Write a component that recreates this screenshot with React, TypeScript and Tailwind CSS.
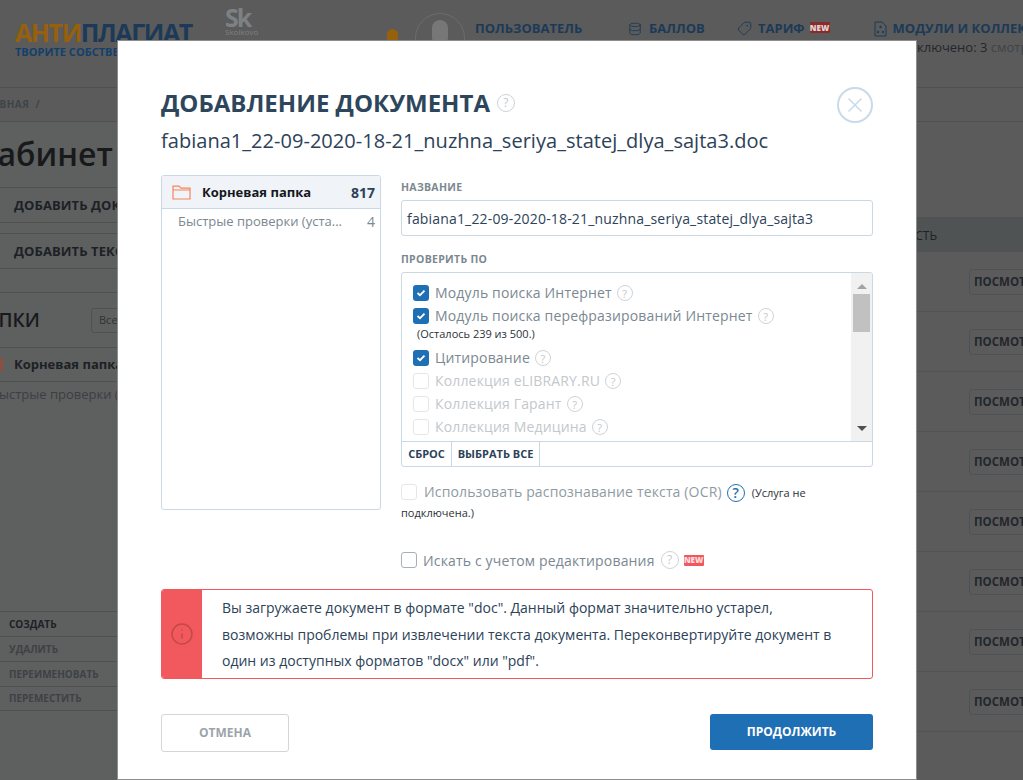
import { Database, Info, Tag, X } from "lucide-react";

const font = { fontFamily: '"Open Sans", "Noto Sans", sans-serif' };

function Help({ className = "ml-[5px] border-[#cfd3d6] text-[#c4c8cb]" }: { className?: string }) {
    return (
        <span className={`inline-flex h-[16px] w-[16px] shrink-0 items-center justify-center rounded-full border text-[11px] leading-none ${className}`}>?</span>
    );
}

function NewBadge({ className = "" }: { className?: string }) {
    return (
        <span className={`inline-flex h-[11px] w-[20px] items-center justify-center rounded-[1px] text-[8px] font-extrabold leading-none text-white/80 ${className}`}>NEW</span>
    );
}

function Check({ on, faded }: { on?: boolean; faded?: boolean }) {
    if (on) {
        return (
            <span className="flex h-[16px] w-[16px] shrink-0 items-center justify-center rounded-[3px] bg-[#1f6fb5]">
                <svg width="10" height="8" viewBox="0 0 10 8" fill="none">
                    <path d="M1.5 4 L4 6.2 L8.5 1.6" stroke="#fff" strokeWidth="1.8" />
                </svg>
            </span>
        );
    }
    return <span className={`h-[16px] w-[16px] shrink-0 rounded-[3px] border ${faded ? "border-[#e4e7e9]" : "border-[#a9b0b5]"}`}></span>;
}

function Row({ label, on, mb = "mb-[7px]" }: { label: string; on?: boolean; mb?: string }) {
    return (
        <div className={`flex h-[16px] items-center ${mb}`}>
            <Check on={on} faded={!on} />
            <span className={`ml-[6px] text-[14px] leading-none tracking-[0.16px] ${on ? "text-[#7b8891]" : "text-[#c3c8cc]"}`}>{label}</span>
            <Help />
        </div>
    );
}

function Background() {
    const sideActions = ["СОЗДАТЬ", "УДАЛИТЬ", "ПЕРЕИМЕНОВАТЬ", "ПЕРЕМЕСТИТЬ"];
    const rows = [0, 1, 2, 3, 4, 5, 6, 7];

    return (
        <div className="flex h-[780px] flex-col overflow-hidden bg-[#5b5b5b]">
            {/* header */}
            <div className="flex h-[88px] shrink-0 border-b border-[#505050] pl-[15px]">
                <div className="w-[210px] shrink-0 overflow-hidden pt-[17px]">
                    <div className="text-[25px] font-bold leading-[30px] tracking-[-1.4px] whitespace-nowrap">
                        <span className="text-[#96600c]">АНТИ</span>
                        <span className="text-[#1c3a57]">ПЛАГИАТ</span>
                    </div>
                    <div className="mt-[-2px] text-[11px] font-bold leading-[14px] whitespace-nowrap text-[#13406b]">ТВОРИТЕ СОБСТВЕННЫМ УМОМ</div>
                </div>
                <div className="w-[162px] shrink-0 pt-[6px] text-[#7d8184]">
                    <div className="text-[25px] font-bold leading-[22px] tracking-[-2px]">Sk</div>
                    <div className="text-[8px] leading-[8px]">Skolkovo</div>
                </div>
                <div className="mt-[29px] h-[30px] w-[11px] shrink-0 rounded-t-full bg-[#96600c]"></div>
                <div className="ml-[17px] mt-[13px] flex h-[50px] w-[50px] shrink-0 justify-center rounded-full border border-[#6c6c6c] pt-[6px]">
                    <div className="h-[26px] w-[16px] rounded-full bg-[#777]"></div>
                </div>
                <div className="ml-[10px] flex h-[56px] shrink-0 items-center pt-[1px] text-[13px] font-bold whitespace-nowrap text-[#1c3a57]">
                    <span className="w-[153px]">ПОЛЬЗОВАТЕЛЬ</span>
                    <Database className="mr-[7px] h-[14px] w-[14px]" strokeWidth={1.5} />
                    <span className="w-[88px]">БАЛЛОВ</span>
                    <Tag className="mr-[6px] h-[15px] w-[15px] -scale-x-100" strokeWidth={1.5} />
                    <span>ТАРИФ</span>
                    <NewBadge className="ml-[5px] mb-[2px] bg-[#8a2b2b]" />
                    <svg className="ml-[44px] mr-[6px]" width="13" height="16" viewBox="0 0 13 16" fill="none" stroke="#1c3a57">
                        <path d="M1 1 H8 L12 5 V15 H1 Z" />
                        <circle cx="6.5" cy="6" r="0.8" fill="#1c3a57" />
                        <circle cx="4" cy="11" r="0.8" fill="#1c3a57" />
                        <circle cx="9" cy="11" r="0.8" fill="#1c3a57" />
                    </svg>
                    <span>МОДУЛИ И КОЛЛЕКЦИИ</span>
                </div>
            </div>

            {/* breadcrumbs */}
            <div className="flex h-[34px] shrink-0 items-center border-b border-[#505050] text-[10px] font-bold tracking-[0.5px] text-[#3f4447]">
                <span className="-ml-[22px]">ГЛАВНАЯ</span>
                <span className="ml-[6px]">/</span>
            </div>

            <div className="flex min-h-0 flex-1">
                {/* folders */}
                <div className="flex w-[520px] shrink-0 flex-col bg-[#5e5f5f]">
                    <div className="-ml-[23px] mt-[10px] h-[44px] text-[32px] font-semibold leading-[44px] text-[#17191b]">Кабинет</div>
                    <div className="mt-[11px] flex h-[36px] items-center border-y border-[#505050] pl-[14px] pt-[1px] text-[13px] font-bold tracking-[0.1px] text-[#1c2126]">ДОБАВИТЬ ДОКУМЕНТ</div>
                    <div className="mt-[10px] flex h-[36px] items-center border-y border-[#505050] pl-[14px] pt-[1px] text-[13px] font-bold tracking-[0.1px] text-[#1c2126]">ДОБАВИТЬ ТЕКСТ</div>
                    <div className="mt-[23px] flex h-[56px] items-center border-y border-[#505050] text-[19px] font-semibold text-[#17191b]">
                        <span className="-ml-[28px] w-[119px]">ПАПКИ</span>
                        <span className="flex h-[25px] w-[120px] items-center rounded-[3px] border border-[#505050] pl-[7px] text-[11px] font-normal text-[#30343a]">Все</span>
                    </div>
                    <div className="flex h-[34px] items-center border-b border-[#505050] text-[13px] font-bold text-[#1c2126]">
                        <span className="mr-[11px] h-[13px] w-[3px] bg-[#8d4f42]"></span>
                        Корневая папка
                    </div>
                    <div className="-ml-[9px] mt-[3px] whitespace-nowrap text-[13px] text-[#3a3f43]">Быстрые проверки (установка)</div>

                    <div className="mt-auto mb-[69px] flex flex-col">
                        {sideActions.map((a, i) => (
                            <div key={a} className={`flex h-[25px] items-center border-t border-[#505050] pl-[9px] text-[10px] font-bold last:border-b ${i === 0 ? "text-[#1c2126]" : "text-[#3d4245]"}`}>
                                {a}
                            </div>
                        ))}
                    </div>
                </div>

                {/* documents */}
                <div className="flex min-w-0 flex-1 flex-col">
                    <div className="mt-[95px] flex h-[35px] shrink-0 items-center justify-end bg-[#505353] pr-[86px] pt-[2px] text-[12px] text-[#1c2126]">ЦЕЛОСТНОСТЬ</div>
                    {rows.map((r) => (
                        <div key={r} className="flex h-[60px] shrink-0 items-start justify-end border-b border-[#535353] pt-[17px]">
                            <span className="-mr-[36px] flex h-[26px] w-[90px] shrink-0 items-center rounded-[3px] border border-[#4d5257] pl-[4px] text-[11.5px] font-bold text-[#23272b]">ПОСМОТРЕТЬ</span>
                        </div>
                    ))}
                </div>
            </div>
        </div>
    );
}

function Modal() {
    return (
        <div className="absolute left-[117px] top-[40px] h-[740px] w-[800px] border border-[#8d8d8d] bg-white px-[43px] pt-[44px] text-[#2c4258]">
            <div className="flex h-[36px] items-center justify-between">
                <div className="flex items-center">
                    <h1 className="text-[24px] font-bold leading-none text-[#2d465c]">ДОБАВЛЕНИЕ ДОКУМЕНТА</h1>
                    <Help className="ml-[7px] h-[18px] w-[18px] border-[#cfd3d6] text-[12px] text-[#c4c8cb]" />
                </div>
                <span className="mt-[4px] flex h-[36px] w-[36px] items-center justify-center rounded-full border-2 border-[#c9dae8]">
                    <X className="h-[24px] w-[24px] text-[#c9dae8]" strokeWidth={1.6} />
                </span>
            </div>
            <div className="mt-[5px] text-[20px] leading-[30px] tracking-[0.03px]">fabiana1_22-09-2020-18-21_nuzhna_seriya_statej_dlya_sajta3.doc</div>

            <div className="mt-[19px] flex gap-[20px]">
                {/* tree */}
                <div className="h-[335px] w-[220px] shrink-0 overflow-hidden rounded-[3px] border border-[#c9d8e4]">
                    <div className="flex h-[33px] items-center border-b border-[#c9d8e4] bg-[#f0f4f8] pl-[10px] pr-[5px] pt-[1px]">
                        <svg width="19" height="15" viewBox="0 0 19 15" fill="none" stroke="#f5845c" strokeWidth="1.2">
                            <path d="M1 13 V1.2 H7 L9 3.2 H18 V14 H1 Z" />
                            <path d="M1 5 H18" />
                        </svg>
                        <span className="ml-[11px] text-[13px] font-bold text-[#15181c]">Корневая папка</span>
                        <span className="ml-auto text-[14px] font-bold text-[#2c4258]">817</span>
                    </div>
                    <div className="flex h-[25px] items-center pl-[16px] pr-[5px] text-[13px] text-[#7b8891]">
                        <span>Быстрые проверки (уста...</span>
                        <span className="ml-auto text-[14px]">4</span>
                    </div>
                </div>

                <div className="min-w-0 flex-1 pt-[5px]">
                    <div className="text-[10.5px] font-bold leading-[14px] tracking-[0.3px] text-[#7b8891]">НАЗВАНИЕ</div>
                    <div className="mt-[6px] flex h-[36px] items-center rounded-[3px] border border-[#c9d8e4] pl-[5px] text-[14px] tracking-[0.17px]">fabiana1_22-09-2020-18-21_nuzhna_seriya_statej_dlya_sajta3</div>

                    <div className="mt-[16px] text-[10.5px] font-bold leading-[14px] tracking-[0.3px] text-[#7b8891]">ПРОВЕРИТЬ ПО</div>
                    <div className="mt-[6px] h-[195px] overflow-hidden rounded-[3px] border border-[#c9d8e4]">
                        <div className="flex h-[168px]">
                            <div className="min-w-0 flex-1 pl-[11px] pt-[12px]">
                                <Row label="Модуль поиска Интернет" on />
                                <Row label="Модуль поиска перефразирований Интернет" on mb="mb-0" />
                                <div className="ml-[4px] mt-[3px] h-[23px] text-[11px] leading-[14px] text-[#2c3238]">(Осталось 239 из 500.)</div>
                                <Row label="Цитирование" on />
                                <Row label="Коллекция eLIBRARY.RU" />
                                <Row label="Коллекция Гарант" />
                                <Row label="Коллекция Медицина" />
                            </div>
                            {/* scrollbar */}
                            <div className="flex w-[21px] shrink-0 flex-col items-center bg-[#f1f1f1]">
                                <div className="flex h-[21px] items-end pb-[5px]">
                                    <span className="border-x-[5px] border-b-[5px] border-x-transparent border-b-[#a3a3a3]"></span>
                                </div>
                                <div className="h-[38px] w-[17px] bg-[#c1c1c1]"></div>
                                <div className="mt-auto flex h-[21px] items-start pt-[6px]">
                                    <span className="border-x-[5px] border-t-[5px] border-x-transparent border-t-[#505050]"></span>
                                </div>
                            </div>
                        </div>
                        <div className="flex h-[26px] border-t border-[#c9d8e4] text-[11px] font-bold text-[#2c4258]">
                            <span className="flex w-[50px] items-center justify-center border-r border-[#c9d8e4]">СБРОС</span>
                            <span className="flex w-[88px] items-center justify-center border-r border-[#c9d8e4]">ВЫБРАТЬ ВСЕ</span>
                        </div>
                    </div>

                    <div className="mt-[15px] h-[60px] text-[11px] leading-[20px] text-[#2c3238]">
                        <span className="mr-[7px] inline-block h-[16px] w-[16px] rounded-[3px] border border-[#e4e7e9] align-[-3px]"></span>
                        <span className="text-[14px] tracking-[0.15px] text-[#8f9ba3]">Использовать распознавание текста (OCR)</span>
                        <span className="ml-[5px] mr-[7px] inline-flex h-[18px] w-[18px] items-center justify-center rounded-full border-[1.5px] border-[#1f6fb5] align-[-1px] text-[14px] font-semibold leading-none text-[#1f6fb5]">?</span>
                        (Услуга не<br />подключена.)
                    </div>

                    <div className="mt-[9px] flex h-[18px] items-center">
                        <Check />
                        <span className="ml-[6px] text-[14px] tracking-[0.16px] text-[#7b8891]">Искать с учетом редактирования</span>
                        <Help className="ml-[6px] h-[18px] w-[18px] border-[#cfd3d6] text-[12px] text-[#c4c8cb]" />
                        <NewBadge className="ml-[5px] bg-[#f0585e]" />
                    </div>
                </div>
            </div>

            <div className="mt-[20px] flex h-[90px] overflow-hidden rounded-[3px] border border-[#f0585e]">
                <div className="flex w-[40px] shrink-0 items-center justify-center bg-[#f2595e]">
                    <Info className="h-[24px] w-[24px] text-[#c24a45]" strokeWidth={1.5} />
                </div>
                <div className="pl-[20px] pt-[5px] text-[14px] leading-[26.5px]">
                    Вы загружаете документ в формате "doc". Данный формат значительно устарел,<br />
                    возможны проблемы при извлечении текста документа. Переконвертируйте документ в<br />
                    один из доступных форматов "docx" или "pdf".
                </div>
            </div>

            <div className="mt-[35px] flex items-start justify-between">
                <span className="flex h-[38px] w-[128px] items-center justify-center rounded-[3px] border border-[#d3d5d7] text-[12px] font-bold text-[#9ca4ab]">ОТМЕНА</span>
                <span className="flex h-[36px] w-[163px] items-center justify-center rounded-[3px] bg-[#1f6fb5] text-[12px] font-bold text-white">ПРОДОЛЖИТЬ</span>
            </div>
        </div>
    );
}

export default function App() {
    return (
        <div className="relative h-[780px] overflow-hidden" style={font}>
            <Background />
            <Modal />
            {/* status line beside the modal */}
            <div className="absolute left-[917px] top-[38px] whitespace-nowrap text-[13px] text-[#23272b]">
                ключено: 3 <span className="text-[#3f4447]">смотреть</span>
            </div>
        </div>
    );
}
